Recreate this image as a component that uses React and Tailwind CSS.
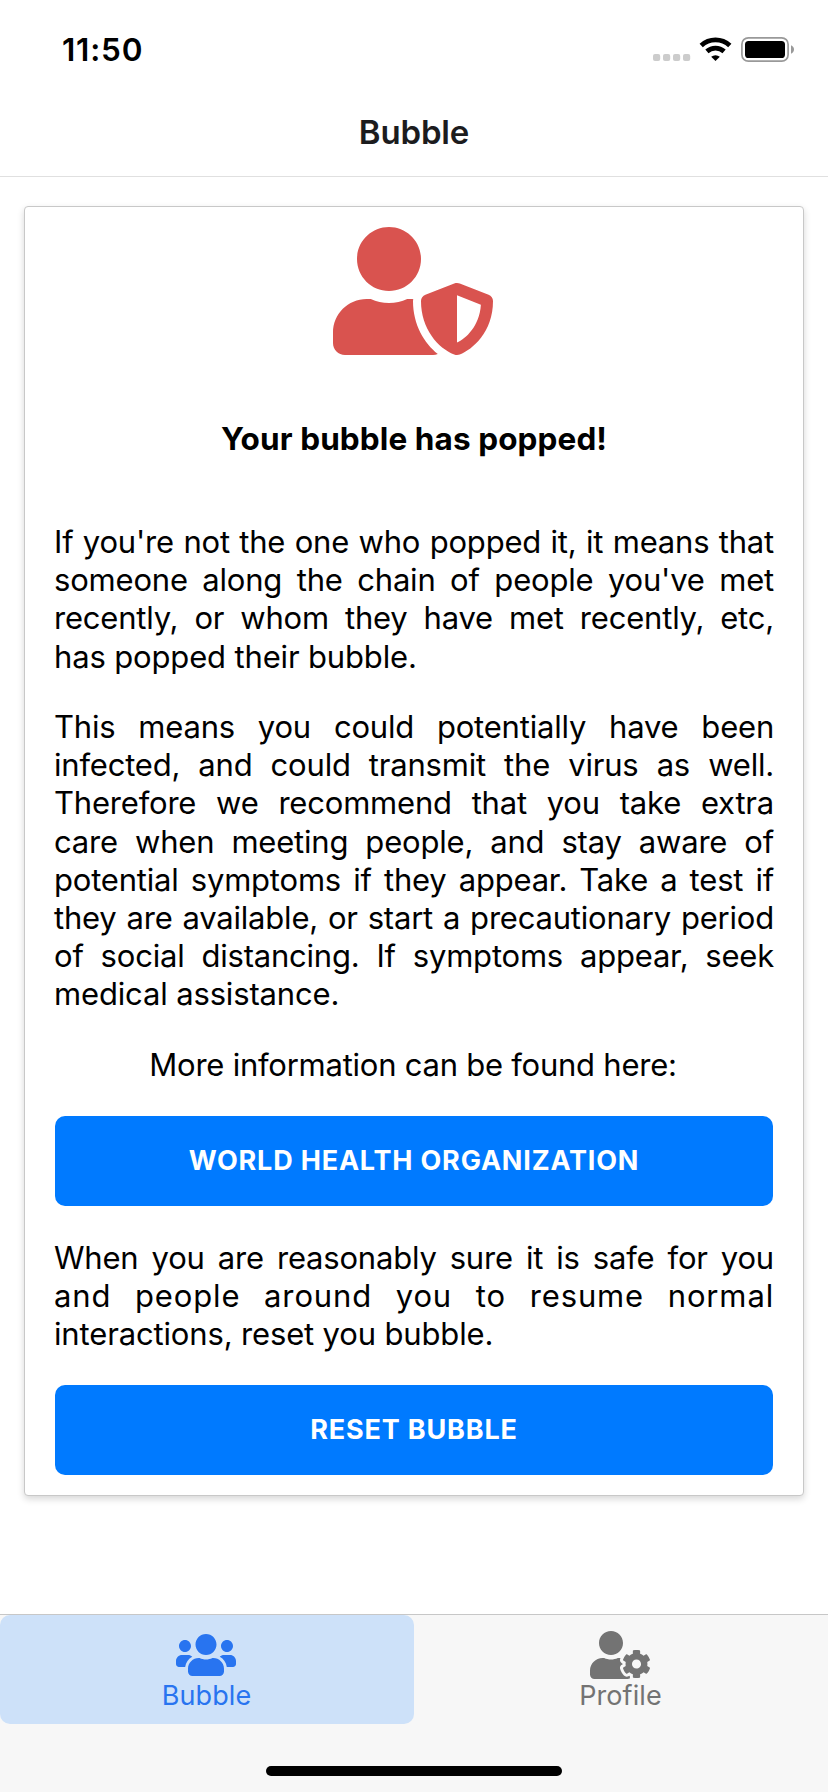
import { FaUserShield, FaUsers, FaUserCog } from 'react-icons/fa'

function StatusBar() {
  return (
    <div className="flex h-[88px] items-start justify-between pl-[62px] pr-[34px] text-black">
      <span className="mt-[31px] text-[31.5px] leading-[38px] font-semibold tracking-[0.8px]">11:50</span>
      <svg className="mt-[34px]" width="142" height="32" viewBox="0 0 142 32">
        <g fill="#cccccc">
          <rect x="1" y="20" width="7.2" height="7" rx="2" />
          <rect x="11" y="20" width="7.2" height="7" rx="2" />
          <rect x="21" y="20" width="7.2" height="7" rx="2" />
          <rect x="31" y="20" width="7.2" height="7" rx="2" />
        </g>
        <g fill="none" stroke="#000000" strokeWidth="4.8">
          <path d="M49.2 11.4a21.2 21.2 0 0 1 28.6 0" />
          <path d="M54.9 17.4a13 13 0 0 1 17.2 0" />
        </g>
        <path d="M63.5 27l-4.3-4.2a6.4 6.4 0 0 1 8.6 0z" fill="#000000" />
        <rect x="89.9" y="3.8" width="46.2" height="23.4" rx="6.4" fill="none" stroke="#999999" strokeWidth="1.7" />
        <rect x="93" y="7" width="40" height="17" rx="3.6" fill="#000000" />
        <path d="M139 11.2c1.8.7 3 2.3 3 4.2s-1.200 3.600-3 4.300z" fill="#999999" />
      </svg>
    </div>
  )
}

function Line({ children, className = 'tracking-[-0.2px]' }) {
  return <span className={`block whitespace-nowrap [text-align-last:justify] ${className}`}>{children}</span>
}

function LastLine({ children }) {
  return <span className="block whitespace-nowrap tracking-[-0.15px]">{children}</span>
}

function Button({ children, className }) {
  return (
    <button
      className={`flex h-[90px] w-full items-center justify-center rounded-[10px] bg-[#007aff] text-[27px] font-bold tracking-[0.81px] text-white uppercase ${className}`}
    >
      {children}
    </button>
  )
}

function Tab({ icon: Icon, label, className }) {
  return (
    <div className={`flex h-[109px] flex-1 flex-col items-center rounded-[10px] pt-4 ${className}`}>
      <Icon className="mr-[2px] h-12 w-[60px]" />
      <span className="mt-[1px] mr-[1px] text-[27px] leading-[32px] tracking-[0.1px]">{label}</span>
    </div>
  )
}

export default function App() {
  return (
    <div className="flex h-[1792px] w-[828px] flex-col overflow-hidden bg-white font-['Inter',sans-serif]">
      <header className="h-[177px] border-b border-[#e0e0e0]">
        <StatusBar />
        <h1 className="mt-6 text-center text-[33px] leading-[40px] font-semibold tracking-[-0.15px] text-[#1c1c1e]">
          Bubble
        </h1>
      </header>

      <main className="flex-1 px-6 pt-[29px]">
        <section className="h-[1290px] rounded-[4px] border border-[#c8c8c8] bg-white px-[30px] pt-5 shadow-[0_3px_7px_rgba(0,0,0,0.16)]">
          <FaUserShield className="mx-auto h-32 w-40 -translate-x-px text-[#d9534f]" />
          <h2 className="mt-[65px] text-center text-[31.5px] leading-[38px] font-bold tracking-[0.1px] text-black">
            Your bubble has popped!
          </h2>

          <div className="text-[31px] leading-[38.2px] text-black">
            <p className="-mx-px mt-[65px] h-[153px]">
              <Line>If you're not the one who popped it, it means that</Line>
              <Line>someone along the chain of people you've met</Line>
              <Line>recently, or whom they have met recently, etc,</Line>
              <LastLine>has popped their bubble.</LastLine>
            </p>
            <p className="-mx-px mt-8 h-[306px]">
              <Line>This means you could potentially have been</Line>
              <Line>infected, and could transmit the virus as well.</Line>
              <Line>Therefore we recommend that you take extra</Line>
              <Line>care when meeting people, and stay aware of</Line>
              <Line>potential symptoms if they appear. Take a test if</Line>
              <Line>they are available, or start a precautionary period</Line>
              <Line>of social distancing. If symptoms appear, seek</Line>
              <LastLine>medical assistance.</LastLine>
            </p>
            <p className="mt-8 h-[38px] pr-[2px] text-center tracking-[-0.24px]">More information can be found here:</p>
          </div>
          <Button className="mt-8">World Health Organization</Button>
          <p className="-mx-px mt-[33px] h-[115px] text-[31px] leading-[38.2px] text-black">
            <Line>When you are reasonably sure it is safe for you</Line>
            <Line className="tracking-[0.85px]">and people around you to resume normal</Line>
            <LastLine>interactions, reset you bubble.</LastLine>
          </p>
          <Button className="mt-[31px]">Reset Bubble</Button>
        </section>
      </main>

      <footer className="flex h-[178px] flex-col items-center border-t border-[#c7c7c7] bg-[#f7f7f7]">
        <nav className="flex w-full">
          <Tab icon={FaUsers} label="Bubble" className="bg-[#cde1f9] text-[#2874f0]" />
          <Tab icon={FaUserCog} label="Profile" className="text-[#737373]" />
        </nav>
        <div className="mt-[42px] h-[10px] w-[296px] rounded-full bg-black" />
      </footer>
    </div>
  )
}
